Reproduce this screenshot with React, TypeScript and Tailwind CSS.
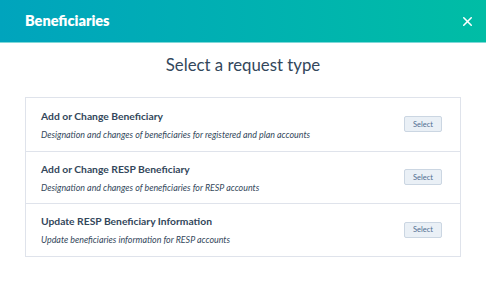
import React from 'react';
import { X } from 'lucide-react';

interface RequestType {
    title: string;
    description: string;
}

const requestTypes: RequestType[] = [
    {
        title: 'Add or Change Beneficiary',
        description: 'Designation and changes of beneficiaries for registered and plan accounts',
    },
    {
        title: 'Add or Change RESP Beneficiary',
        description: 'Designation and changes of beneficiaries for RESP accounts',
    },
    {
        title: 'Update RESP Beneficiary Information',
        description: 'Update beneficiaries information for RESP accounts',
    },
];

export default function App() {
    return (
        <div className="w-[486px] h-[283px] bg-white overflow-hidden font-['Lato','Open_Sans',sans-serif] text-[#33475b]">
            <div className="h-[43px] flex items-center justify-between pl-[25px] pr-[11px] bg-gradient-to-r from-[#00a4bd] to-[#00bda5] border-b border-[#7fd8d8]">
                <h1 className="text-[14.5px] font-extrabold text-white">Beneficiaries</h1>
                <button className="text-white">
                    <X size={15} strokeWidth={2.5} />
                </button>
            </div>

            <h2 className="mt-[10px] text-center text-[16.8px] leading-[24px]">Select a request type</h2>

            <div className="mx-[25px] mt-[20px] border border-[#dfe3eb]">
                {requestTypes.map((item, index) => (
                    <div
                        key={item.title}
                        className={`h-[52.5px] flex items-center justify-between pl-[15px] pr-[18px] ${index > 0 ? 'border-t border-[#dfe3eb]' : ''}`}
                    >
                        <div>
                            <div className="text-[10.3px] font-bold leading-[14px]">{item.title}</div>
                            <div className="mt-[6px] text-[8.9px] italic leading-[11px] text-[#33475b]">{item.description}</div>
                        </div>
                        <button className="w-[38px] h-[16px] rounded-[2px] border border-[#cbd6e2] bg-[#eaf0f6] text-[7.5px] text-[#506e91] leading-none">
                            Select
                        </button>
                    </div>
                ))}
            </div>
        </div>
    );
}
